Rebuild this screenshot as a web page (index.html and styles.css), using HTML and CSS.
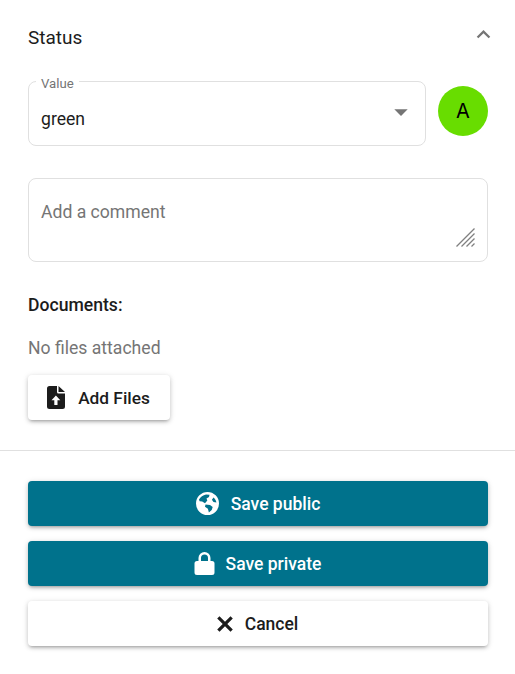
FILE: index.html
```html
<!DOCTYPE html>
<html lang="en">
<head>
    <meta charset="UTF-8">
    <title>Status</title>
    <link rel="stylesheet" href="styles.css">
</head>
<body>

    <section class="panel">
        <div class="panel-head">
            <h2>Status</h2>
            <svg class="chevron" viewBox="0 0 24 24"><path d="M12 8l-6 6 1.410 1.410L12 10.830l4.590 4.580L18 14z"/></svg>
        </div>

        <div class="status-row">
            <div class="select-box">
                <span class="select-label">Value</span>
                <span class="select-value">green</span>
                <svg class="caret" viewBox="0 0 24 24"><path d="M7 10l5 5 5-5z"/></svg>
            </div>
            <div class="avatar">A</div>
        </div>

        <div class="comment-box">
            <span class="placeholder">Add a comment</span>
            <svg class="resize" viewBox="0 0 19 19">
                <path d="M.5 18.500L18.500.5M5.500 18.500L18.500 5.500M10.500 18.500L18.500 10.500M15.500 18.500L18.500 15.500"/>
            </svg>
        </div>

        <h3>Documents:</h3>
        <p class="no-files">No files attached</p>
        <button class="btn btn-add">
            <svg viewBox="0 0 27 27"><path fill-rule="evenodd" d="M6.500 2H14V8a1.500 1.500 0 0 0 1.500 1.500H22V22.500a2.500 2.500 0 0 1-2.500 2.500H6.500A2.500 2.500 0 0 1 4 22.500V4.500A2.500 2.500 0 0 1 6.500 2zM15.500 2L22 8H15.500zM12.900 11.500L8.500 16.200H11.300V21H14.500V16.200H17.300z"/></svg>
            Add Files
        </button>
    </section>

    <hr class="divider">

    <section class="actions">
        <button class="btn btn-main btn-public">
            <svg viewBox="0 0 27 27"><path fill-rule="evenodd" d="M13.500 2a11.500 11.500 0 1 0 0 23 11.500 11.500 0 0 0 0-23zM12 4.500l3.500.3-.5 2.200-2.500 1.500.8 2-2.300 2.800-2.800-1.800-2.600-.2-.6-1.800C6.500 7 9 5 12 4.500zM19.500 7.500c1.500 1.200 2.600 3 2.900 5l-2.900-.6-1.600-2.200zM11.500 14.500l4.500.4 2.700 2-1 3-2.800 2.500-1-3.600-2.900-2z"/></svg>
            Save public
        </button>
        <button class="btn btn-main btn-private">
            <svg viewBox="0 0 27 27"><path fill-rule="evenodd" d="M6 11H7.500V8a6 6 0 0 1 12 0V11H21a2.500 2.500 0 0 1 2.500 2.500V22.500A2.500 2.500 0 0 1 21 25H6a2.500 2.500 0 0 1-2.500-2.500V13.500A2.500 2.500 0 0 1 6 11zM10 11H17V8a3.500 3.500 0 0 0-7 0z"/></svg>
            Save private
        </button>
        <button class="btn btn-cancel">
            <svg viewBox="0 0 26 26"><path d="M7.500 5.200L13 10.700l5.500-5.500 2.300 2.300L15.300 13l5.500 5.500-2.300 2.300L13 15.300l-5.500 5.500-2.300-2.300L10.700 13 5.200 7.500z"/></svg>
            Cancel
        </button>
    </section>

</body>
</html>
```

FILE: styles.css
```css
body {
    margin: 0;
    background-color: #ffffff;
    color: #1c1c1c;
    font-family: Roboto, Arial, sans-serif;
    font-size: 17.600px;
}
h2, h3, p {
    margin: 0;
}
.panel {
    padding: 23px 27px 30px 28px;
}
.panel-head {
    display: flex;
    justify-content: space-between;
    height: 29px;
}
.panel-head h2 {
    font-size: 19px;
    font-weight: 400;
    line-height: 29px;
}
.chevron {
    width: 27px;
    height: 27px;
    margin: -2px -9px 0 0;
    fill: #757575;
}
.status-row {
    display: flex;
    align-items: flex-start;
    gap: 12px;
    margin-top: 29px;
}
.select-box {
    position: relative;
    flex: 1;
    display: flex;
    align-items: center;
    justify-content: space-between;
    height: 65px;
    box-sizing: border-box;
    padding: 10px 8px 0 12px;
    border: 1px solid #e0e0e0;
    border-radius: 8px;
}
.select-label {
    position: absolute;
    top: -5px;
    left: 7px;
    padding: 0 5px;
    background-color: #ffffff;
    font-size: 13.200px;
    line-height: 14px;
    color: #757575;
}
.caret {
    width: 32px;
    height: 32px;
    margin-top: -14px;
    fill: #757575;
}
.avatar {
    display: flex;
    align-items: center;
    justify-content: center;
    width: 50px;
    height: 50px;
    margin-top: 5px;
    border-radius: 50%;
    background-color: #68dd00;
    color: #000000;
    font-family: Inter, sans-serif;
    font-size: 20px;
}
.comment-box {
    position: relative;
    height: 84px;
    box-sizing: border-box;
    margin-top: 32px;
    padding: 23px 12px;
    border: 1px solid #e0e0e0;
    border-radius: 8px;
}
.placeholder {
    color: #757575;
}
.resize {
    position: absolute;
    right: 12px;
    bottom: 14px;
    width: 19px;
    height: 19px;
    fill: none;
    stroke: #808080;
    stroke-width: 1.300;
}
h3 {
    margin-top: 33px;
    font-size: 17.600px;
    font-weight: 500;
    line-height: 20px;
}
.no-files {
    margin-top: 22px;
    line-height: 22px;
    color: #757575;
}
.btn {
    display: flex;
    align-items: center;
    justify-content: center;
    gap: 8px;
    height: 45px;
    border: none;
    border-radius: 4px;
    font-family: Roboto, Arial, sans-serif;
    font-size: 17.500px;
    font-weight: 500;
    box-shadow: 0 3px 3px -2px rgba(0,0,0,0.2), 0 2px 4px rgba(0,0,0,0.14), 0 1px 6px rgba(0,0,0,0.12);
}
.btn svg {
    width: 27px;
    height: 27px;
    fill: currentColor;
}
.btn-add {
    width: 142px;
    margin-top: 16px;
    padding: 0 5px 0 0;
    background-color: #ffffff;
    color: #1c1c1c;
    font-size: 17.300px;
}
.divider {
    margin: 0;
    border: none;
    border-top: 1px solid #e0e0e0;
}
.actions {
    display: flex;
    flex-direction: column;
    gap: 15px;
    padding: 30px 27px 28px 28px;
}
.btn-main {
    background-color: #00728c;
    color: #ffffff;
}
.btn-public {
    gap: 10px;
    padding: 0 2px 0 0;
}
.btn-private {
    gap: 8px;
    padding: 0 4px 0 0;
}
.btn-cancel {
    gap: 7px;
    padding: 0 6px 0 0;
    background-color: #ffffff;
    color: #1c1c1c;
}
.btn-cancel svg {
    width: 26px;
    height: 26px;
}
```
